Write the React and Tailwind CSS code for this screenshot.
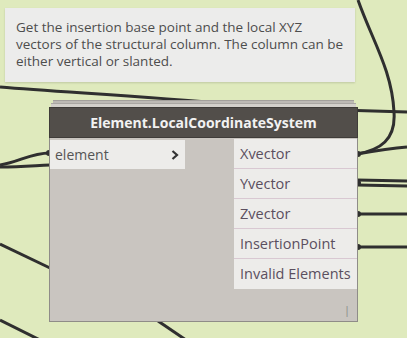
import React from "react";

const outputs = ["Xvector", "Yvector", "Zvector", "InsertionPoint", "Invalid Elements"];

const Wires = () => (
  <svg className="absolute inset-0" width="407" height="338" fill="none" stroke="#2f2f2f" strokeWidth="3">
    {/* top right long wire */}
    <path d="M358 0 C 372 40, 392 70, 394 112 C 396 140, 380 150, 357 154" />
    <path d="M0 87 C 60 92, 140 96, 230 104" />
    <path d="M340 110 L 407 112" />
    {/* input side */}
    <path d="M0 165 C 20 162, 30 153, 50 153" />
    <path d="M0 167 C 20 167, 30 166, 50 165" />
    {/* outputs */}
    <path d="M357 154 C 380 150, 395 148, 407 147" />
    <path d="M357 180 L 407 181" />
    <path d="M357 185 L 407 186" />
    <path d="M357 214 L 407 214" />
    <path d="M357 247 L 407 247" />
    {/* diagonals */}
    <path d="M0 244 L 50 268" />
    <path d="M0 320 L 40 340" />
    <path d="M158 321 L 186 340" />
    {/* port dots */}
    <g fill="#2f2f2f" stroke="none">
      <circle cx="49" cy="153" r="3" />
      <circle cx="358" cy="154" r="3" />
      <circle cx="358" cy="183" r="3" />
      <circle cx="358" cy="214" r="3" />
      <circle cx="358" cy="247" r="3" />
    </g>
  </svg>
);

export default function App() {
  return (
    <div
      className="relative w-[407px] h-[338px] overflow-hidden bg-[#dfeabd] pt-[8px]"
      style={{ fontFamily: '"Open Sans", "Noto Sans", sans-serif' }}
    >
      <Wires />
      <div className="relative ml-[5px] w-[350px] h-[74px] bg-[#ececeb] shadow-[0_1px_2px_rgba(0,0,0,0.15)] pl-[11px] pt-[11px] text-[13.5px] leading-[17px] text-[#4d4d4d] whitespace-nowrap">
        Get the insertion base point and the local XYZ
        <br />
        vectors of the structural column. The column can be
        <br />
        either vertical or slanted.
      </div>

      <div className="relative ml-[49px] mt-[18px] w-[309px]">
        <div className="mx-[4px] h-[3px] bg-[#bdbab5] border-t border-[#a3a09c]" />
        <div className="mx-[2px] h-[4px] bg-[#d3d0cb] border-t border-[#aaa7a3]" />
        <div className="h-[31px] bg-[#524e4a] border border-[#3f3c39] flex items-center justify-center text-[#f2f2f2] font-bold text-[14px]">
          Element.LocalCoordinateSystem
        </div>
        <div className="h-[184px] bg-[#c9c5c0] border-x border-b border-[#8f8c88] flex justify-between">
          <div className="pt-[2px]">
            <div className="w-[135px] h-[29px] bg-[#edecea] flex items-center justify-between pl-[5px] pr-[6px] text-[14px] text-[#555]">
              <span>element</span>
              <svg width="8" height="10" viewBox="0 0 8 10" fill="none" stroke="#333" strokeWidth="2.2">
                <path d="M1.5 1 L6 5 L1.5 9" />
              </svg>
            </div>
          </div>
          <div className="flex flex-col justify-between">
            <div className="w-[123px] pt-[1px]">
              {outputs.map((o, i) => (
                <div
                  key={o}
                  className={`h-[30px] bg-[#edecea] flex items-center pl-[6px] text-[14.5px] text-[#5b4f5f] ${i < outputs.length - 1 ? "border-b border-[#d9c8d2]" : ""}`}
                >
                  {o}
                </div>
              ))}
            </div>
            <div className="self-end pr-[7px] pb-[4px] text-[11px] leading-[14px] text-[#888]">|</div>
          </div>
        </div>
      </div>
    </div>
  );
}
